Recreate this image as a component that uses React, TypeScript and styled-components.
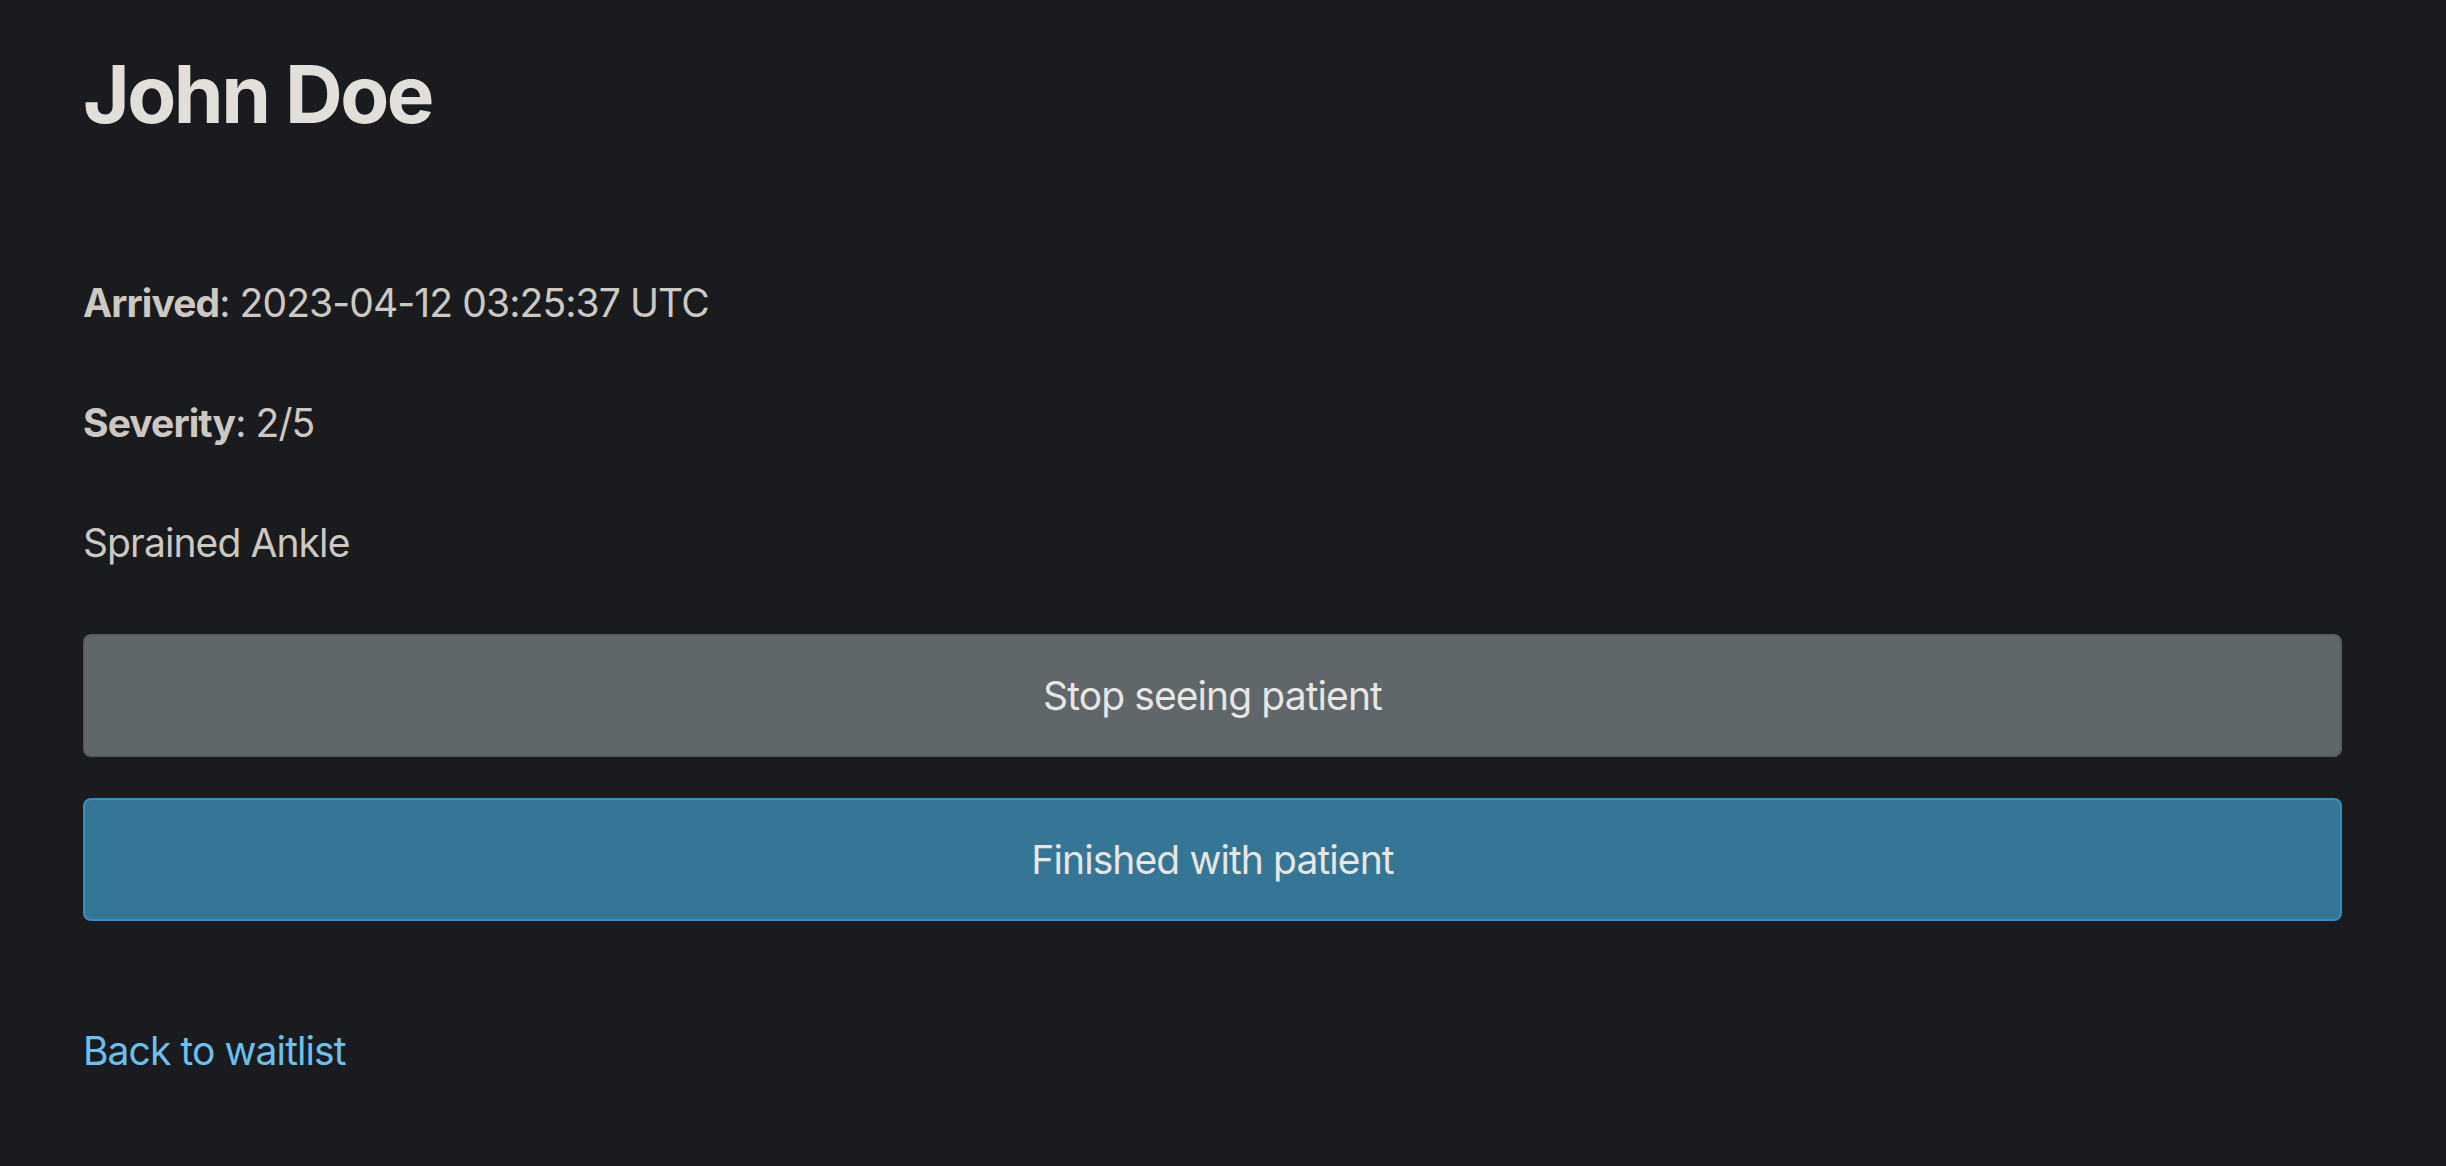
import styled, { createGlobalStyle } from "styled-components";

const GlobalStyle = createGlobalStyle`
  html, body {
    margin: 0;
    padding: 0;
    background-color: #1a1b1e;
  }
  body {
    font-family: Inter, "Noto Sans", "Liberation Sans", sans-serif;
    color: #cdc9c2;
    -webkit-font-smoothing: antialiased;
  }
`;

const Page = styled.main`
  min-height: 100vh;
  box-sizing: border-box;
  padding: 46px 104px 60px 83px;
  display: flex;
  flex-direction: column;
`;

const Name = styled.h1`
  margin: 0 0 131px;
  font-size: 80px;
  line-height: 96px;
  font-weight: 700;
  letter-spacing: -2.5px;
  color: #e2dfda;
`;

const Detail = styled.p`
  margin: 0 0 60px;
  font-size: 39px;
  line-height: 60px;
  letter-spacing: -0.9px;

  strong {
    font-weight: 700;
  }
`;

const Actions = styled.div`
  display: flex;
  flex-direction: column;
  gap: 41px;
  margin-top: 1px;
`;

const ActionButton = styled.button<{ $variant: "secondary" | "primary" }>`
  width: 100%;
  height: 123px;
  box-sizing: border-box;
  border-radius: 8px;
  font-family: inherit;
  font-size: 39px;
  letter-spacing: -0.9px;
  color: #e8e6e3;
  cursor: pointer;
  background-color: ${(p) => (p.$variant === "primary" ? "#357595" : "#5f676b")};
  border: 2px solid
    ${(p) => (p.$variant === "primary" ? "#3b8dbd" : "#565d62")};
`;

const BackLink = styled.a`
  margin-top: 100px;
  align-self: flex-start;
  font-size: 39px;
  line-height: 60px;
  letter-spacing: -0.9px;
  color: #6cc0ee;
  text-decoration: none;
`;

export default function App() {
  return (
    <>
      <GlobalStyle />
      <Page>
        <Name>John Doe</Name>
        <Detail>
          <strong>Arrived</strong>: 2023-04-12 03:25:37 UTC
        </Detail>
        <Detail>
          <strong>Severity</strong>: 2/5
        </Detail>
        <Detail>Sprained Ankle</Detail>
        <Actions>
          <ActionButton $variant="secondary">Stop seeing patient</ActionButton>
          <ActionButton $variant="primary">Finished with patient</ActionButton>
        </Actions>
        <BackLink href="#">Back to waitlist</BackLink>
      </Page>
    </>
  );
}
